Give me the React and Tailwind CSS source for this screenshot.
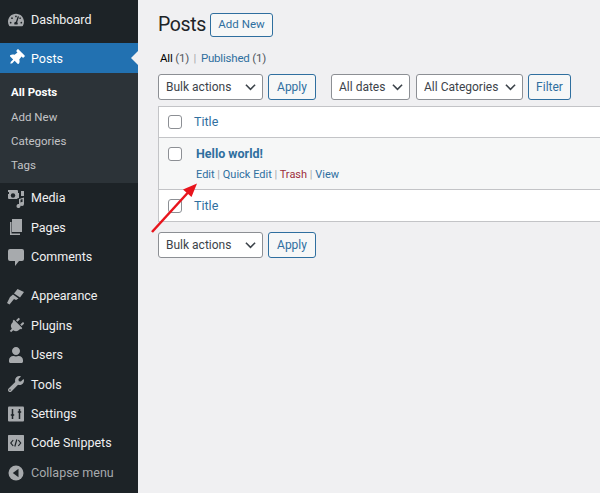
import { Fragment } from 'react';
import { FaTachometerAlt, FaThumbtack, FaPlug, FaUser, FaWrench } from 'react-icons/fa';

const font = "font-['Roboto','Open_Sans',sans-serif]";

function MediaIcon() {
    return (
        <svg viewBox="0 0 20 20" className="w-[20px] h-[20px]" fill="currentColor">
            <path d="M2 2h9a1 1 0 0 1 1 1v2h1v5a2 2 0 0 0-2 1H3a1 1 0 0 1-1-1V6h1V4H2z" />
            <circle cx="7" cy="7.500" r="2.200" fill="#1d2327" />
            <path d="M13 11l5-1.500V16a2 2 0 1 1-1.500-1.900v-3l-2 .6V18a2 2 0 1 1-1.500-1.900z" />
            <path d="M15 3h3v5h-3z" />
        </svg>
    );
}

function PagesIcon() {
    return (
        <svg viewBox="0 0 20 20" className="w-[20px] h-[20px]" fill="currentColor">
            <path d="M6 2h10v13H6z" />
            <path d="M4 5v13h10v-1.500H5.500V5z" />
        </svg>
    );
}

function CommentsIcon() {
    return (
        <svg viewBox="0 0 20 20" className="w-[20px] h-[20px]" fill="currentColor">
            <path d="M4 2h12a2 2 0 0 1 2 2v8a2 2 0 0 1-2 2h-3l-4 5v-5H4a2 2 0 0 1-2-2V4a2 2 0 0 1 2-2z" />
        </svg>
    );
}

function AppearanceIcon() {
    return (
        <svg viewBox="0 0 20 20" className="w-[20px] h-[20px]" fill="currentColor">
            <path d="M11.500 3l6.500 3-4 5.500-6-4z" />
            <path d="M7 8.500l5.500 4-2.500 1.500-2-1-4.500 5.500-2.500-1.500 3-6z" />
        </svg>
    );
}

function SettingsIcon() {
    return (
        <svg viewBox="0 0 20 20" className="w-[20px] h-[20px]">
            <rect x="2" y="2.500" width="16" height="15" rx="1" fill="currentColor" />
            <path d="M6.500 5v10M13.500 5v10M4.800 11h3.400M11.800 8h3.400" stroke="#1d2327" strokeWidth="1.500" fill="none" />
        </svg>
    );
}

function SnippetsIcon() {
    return (
        <svg viewBox="0 0 20 20" className="w-[20px] h-[20px]">
            <rect x="2" y="2" width="16" height="16" rx="0.500" fill="currentColor" />
            <path d="M7.200 7L4.800 10l2.400 3M10.800 6.500L8.800 13.500M12.300 7l2.400 3-2.400 3" stroke="#1d2327" strokeWidth="1.200" fill="none" />
        </svg>
    );
}

function CollapseIcon() {
    return (
        <svg viewBox="0 0 20 20" className="w-[20px] h-[20px]">
            <circle cx="10" cy="10" r="7.500" fill="currentColor" />
            <path d="M12.500 5.800v8.400L6.800 10z" fill="#1d2327" />
        </svg>
    );
}

const fa = "w-[16px] h-[16px]";

const topMenu = [
    { label: 'Media', icon: <MediaIcon /> },
    { label: 'Pages', icon: <PagesIcon /> },
    { label: 'Comments', icon: <CommentsIcon /> },
];

const bottomMenu = [
    { label: 'Appearance', icon: <AppearanceIcon /> },
    { label: 'Plugins', icon: <FaPlug className={`${fa} rotate-45`} /> },
    { label: 'Users', icon: <FaUser className={fa} /> },
    { label: 'Tools', icon: <FaWrench className={fa} /> },
    { label: 'Settings', icon: <SettingsIcon /> },
    { label: 'Code Snippets', icon: <SnippetsIcon /> },
];

function MenuItem({ icon, label, className = "h-[29.4px] text-[#f0f0f1]" }) {
    return (
        <div className={`flex items-center text-[12.500px] ${className}`}>
            <div className="w-[31px] pl-[1px] shrink-0 flex items-center justify-center text-[#a7aaad]">{icon}</div>
            <span className="pt-[1px]">{label}</span>
        </div>
    );
}

function SelectBox({ label, width }) {
    return (
        <div className={`${width} h-[26px] bg-white border border-[#8c8f94] rounded-[3px] pl-[7px] pr-[6px] flex items-center justify-between text-[12px] text-[#3c434a]`}>
            <span className="whitespace-nowrap">{label}</span>
            <svg viewBox="0 0 12 8" className="w-[11px] h-[8px]" fill="none" stroke="#3c434a" strokeWidth="1.700">
                <path d="M1 1.500l5 5 5-5" />
            </svg>
        </div>
    );
}

function SecondaryButton({ label, width }) {
    return (
        <div className={`${width} h-[26px] bg-[#f6f7f7] border border-[#2f6f9f] rounded-[3px] flex items-center justify-center text-[12px] text-[#2f6f9f]`}>
            {label}
        </div>
    );
}

function CheckBox() {
    return <div className="w-[14px] h-[14px] bg-white border border-[#8c8f94] rounded-[3px] shrink-0"></div>;
}

function Separator() {
    return <span className="text-[#a7aaad]">|</span>;
}

export default function App() {
    return (
        <div className={`relative flex w-[600px] h-[493px] overflow-hidden bg-[#f0f0f2] ${font}`}>

            {/* Sidebar */}
            <div className="w-[138px] shrink-0 bg-[#1d2327] pt-[5px]">
                <MenuItem icon={<FaTachometerAlt className={fa} />} label="Dashboard" />

                <div className="relative mt-[9px] h-[30px] bg-[#2271b1] flex items-center text-[12.500px] text-white">
                    <div className="w-[31px] pl-[1px] flex items-center justify-center">
                        <FaThumbtack className="w-[16px] h-[16px] rotate-45" />
                    </div>
                    <span className="pt-[1px]">Posts</span>
                    <div className="absolute right-0 top-[8px] border-y-[7px] border-y-transparent border-r-[7px] border-r-[#f0f0f1]"></div>
                </div>

                <div className="h-[110px] bg-[#2c3338] pt-[7px] text-[11.500px] text-[#c3c4c7] pl-[11px]">
                    <div className="h-[24.300px] leading-[24px] text-white font-bold">All Posts</div>
                    <div className="h-[24.300px] leading-[24px]">Add New</div>
                    <div className="h-[24.300px] leading-[24px]">Categories</div>
                    <div className="h-[24.300px] leading-[24px]">Tags</div>
                </div>

                {topMenu.map(({ label, icon }) => (
                    <Fragment key={label}>
                        <MenuItem icon={icon} label={label} />
                    </Fragment>
                ))}

                <div className="h-[10px]"></div>

                {bottomMenu.map(({ label, icon }) => (
                    <Fragment key={label}>
                        <MenuItem icon={icon} label={label} />
                    </Fragment>
                ))}

                <MenuItem icon={<CollapseIcon />} label="Collapse menu" className="h-[30px] text-[#a7aaad]" />
            </div>

            {/* Main content */}
            <div className="flex-1 min-w-0 pl-[20px]">

                <div className="flex items-center h-[37px] pt-[13px]">
                    <h1 className="w-[52px] text-[19.500px] tracking-[-0.4px] leading-[24px] text-[#1d2327]">Posts</h1>
                    <div className="w-[63px] h-[24px] bg-[#f6f7f7] border border-[#2f6f9f] rounded-[3px] flex items-center justify-center text-[11.500px] text-[#2f6f9f]">Add New</div>
                </div>

                <div className="mt-[12px] h-[18px] leading-[18px] text-[11.500px] tracking-[-0.2px] text-[#50575e] pl-[2px]">
                    <span className="text-black">All</span> (1) <span className="text-[#a7aaad] mx-[2px]">|</span> <span className="text-[#2f6f9f]">Published</span> (1)
                </div>

                <div className="mt-[7px] flex items-center">
                    <SelectBox label="Bulk actions" width="w-[105px]" />
                    <div className="ml-[5px]"><SecondaryButton label="Apply" width="w-[48px]" /></div>
                    <div className="ml-[15px]"><SelectBox label="All dates" width="w-[79px]" /></div>
                    <div className="ml-[6px]"><SelectBox label="All Categories" width="w-[107px]" /></div>
                    <div className="ml-[5px]"><SecondaryButton label="Filter" width="w-[43px]" /></div>
                </div>

                <div className="mt-[6px] bg-white border border-[#c3c4c7] border-r-0 text-[12.500px] text-[#2f6f9f]">
                    <div className="h-[31px] flex items-center pl-[9px] gap-[12px] border-b border-[#c3c4c7]">
                        <CheckBox />
                        <span className="pt-[1px]">Title</span>
                    </div>
                    <div className="h-[52px] bg-[#f6f7f7] border-b border-[#c3c4c7] flex pl-[9px]">
                        <div className="pt-[9px]"><CheckBox /></div>
                        <div className="ml-[14px] pt-[6px]">
                            <div className="h-[20px] leading-[20px] font-bold">Hello world!</div>
                            <div className="mt-[2px] h-[18px] leading-[18px] text-[11px] whitespace-nowrap">
                                Edit <Separator /> Quick Edit <Separator /> <span className="text-[#9c2f3d]">Trash</span> <Separator /> View
                            </div>
                        </div>
                    </div>
                    <div className="h-[31px] flex items-center pl-[9px] gap-[12px]">
                        <CheckBox />
                        <span className="pt-[1px]">Title</span>
                    </div>
                </div>

                <div className="mt-[10px] flex items-center">
                    <SelectBox label="Bulk actions" width="w-[105px]" />
                    <div className="ml-[5px]"><SecondaryButton label="Apply" width="w-[48px]" /></div>
                </div>
            </div>

            {/* Red annotation arrow */}
            <svg className="absolute left-0 top-0 w-[600px] h-[493px] pointer-events-none" viewBox="0 0 600 493">
                <path d="M152 232L188 192.500" stroke="#e8141c" strokeWidth="2.500" fill="none" />
                <path d="M197 183.500L191.500 197L183 189.500z" fill="#e8141c" />
            </svg>
        </div>
    );
}
